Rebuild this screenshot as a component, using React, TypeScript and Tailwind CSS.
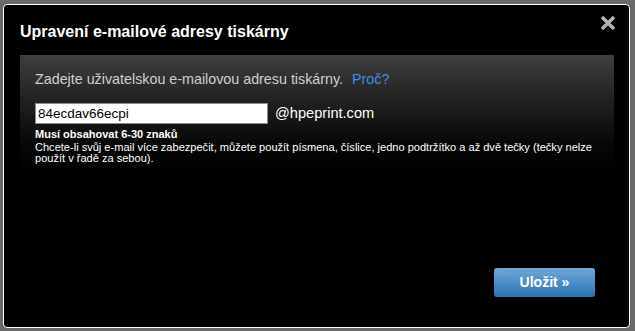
import React from "react";

export default function App() {
  return (
    <div
      className="w-[635px] h-[331px] bg-[#6a6a6a] pt-[4px] pl-[3px] overflow-hidden"
      style={{ fontFamily: '"Liberation Sans", Arial, sans-serif' }}
    >
      <div className="relative w-[627px] h-[324px] border border-white rounded-[4px] bg-black flex flex-col">
        <div className="pl-[16px] pt-[17px] h-[50px] text-white font-bold text-[16px] leading-[20px]">
          Upravení e-mailové adresy tiskárny
        </div>
        <button className="absolute right-[12px] top-[9px] w-[18px] h-[18px] flex items-center justify-center">
          <svg width="16" height="16" viewBox="0 0 16 16">
            <path d="M2 2 L14 14 M14 2 L2 14" stroke="#b4b4b4" strokeWidth="3.4" strokeLinecap="butt" />
          </svg>
        </button>
        <div className="ml-[16px] mr-[15px] h-[140px] bg-gradient-to-b from-[#3f3f3f] to-[#000000] pl-[15px] pt-[15px]">
          <div className="text-[14.3px] leading-[18px] text-[#cfcfcf]">
            Zadejte uživatelskou e-mailovou adresu tiskárny.{" "}
            <span className="text-[#3d8fe6] ml-[5px]">Proč?</span>
          </div>
          <div className="flex items-center mt-[15px]">
            <div className="w-[233px] h-[21px] bg-white border border-[#8a8a8a] pl-[2px] text-[13.5px] leading-[19px] text-black">
              84ecdav66ecpi
            </div>
            <span className="ml-[7px] text-[14.6px] text-white">@hpeprint.com</span>
          </div>
          <div className="mt-[3px] text-[11px] leading-[13px] font-bold text-white">
            Musí obsahovat 6-30 znaků
          </div>
          <div className="w-[565px] text-[11.05px] leading-[11px] text-white mt-[1px]">
            Chcete-li svůj e-mail více zabezpečit, můžete použít písmena, číslice, jedno podtržítko a až dvě tečky (tečky nelze použít v řadě za sebou).
          </div>
        </div>
        <div className="flex-1" />
        <div className="flex justify-end pr-[34px] pb-[30px]">
          <button className="w-[101px] h-[29px] rounded-[3px] bg-gradient-to-b from-[#6fa8da] to-[#2a73b5] text-white font-bold text-[14px] leading-[29px] text-center">
            Uložit »
          </button>
        </div>
      </div>
    </div>
  );
}
